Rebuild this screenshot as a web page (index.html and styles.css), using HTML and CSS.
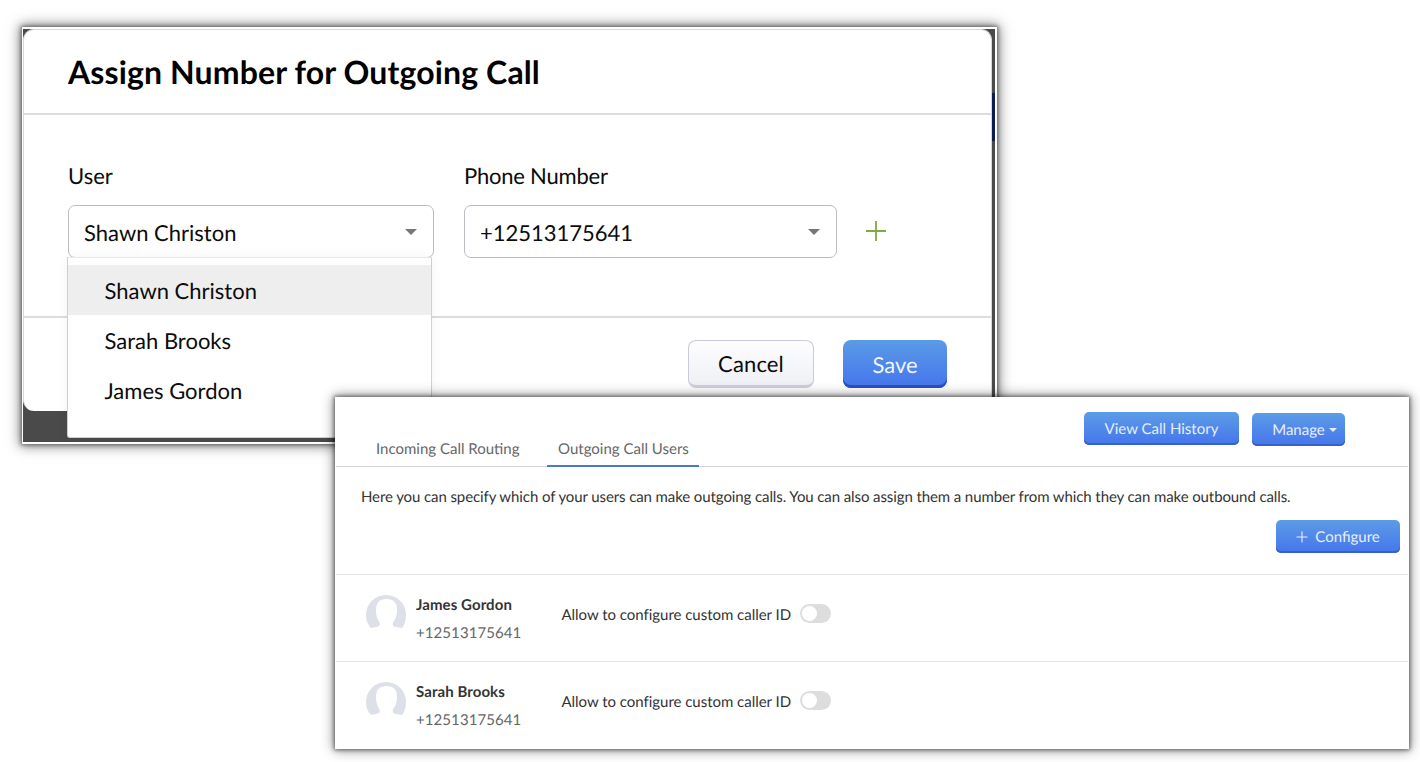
FILE: index.html
```html
<!DOCTYPE html>
<html lang="en">
<head>
<meta charset="UTF-8">
<meta name="viewport" content="width=device-width, initial-scale=1.0">
<title>Outgoing Call Users</title>
<link rel="stylesheet" href="styles.css">
</head>
<body>

<div class="backdrop">
    <div class="modal">
        <div class="modal-header">
            <h1>Assign Number for Outgoing Call</h1>
        </div>

        <div class="modal-body">
            <div class="field user-field">
                <span class="label">User</span>
                <div class="select"><span class="value">Shawn Christon</span><i class="arrow"></i></div>
                <ul class="dropdown">
                    <li class="selected">Shawn Christon</li>
                    <li>Sarah Brooks</li>
                    <li>James Gordon</li>
                </ul>
            </div>
            <div class="field phone-field">
                <span class="label">Phone Number</span>
                <div class="select"><span class="value">+12513175641</span><i class="arrow"></i></div>
            </div>
            <svg class="add" width="20" height="20" viewBox="0 0 20 20">
                <path d="M10 0V20M0 10H20" stroke="#7cab45" stroke-width="1.8"/>
            </svg>
        </div>

        <div class="modal-footer">
            <button class="btn-large cancel">Cancel</button>
            <button class="btn-large save">Save</button>
        </div>
    </div>
    <div class="page-edge"></div>
</div>

<div class="users-panel">
    <div class="tabs">
        <div class="tab tab-incoming">Incoming Call Routing</div>
        <div class="tab tab-outgoing active">Outgoing Call Users</div>
        <div class="actions">
            <button class="btn history">View Call History</button>
            <button class="btn manage"><span>Manage</span><i class="arrow"></i></button>
        </div>
    </div>

    <div class="intro">
        <p>Here you can specify which of your users can make outgoing calls. You can also assign them a number from which they can make outbound calls.</p>
        <button class="btn configure">
            <svg width="12" height="12" viewBox="0 0 12 12"><path d="M6 .5V11.5M.5 6H11.5" stroke="#e6eefc" stroke-width="1.1"/></svg>
            <span>Configure</span>
        </button>
    </div>

    <div class="row">
        <svg class="avatar" width="40" height="34" viewBox="0 0 40 34">
            <path d="M5 33Q0 28 0 20A20 20 0 0 1 40 20Q40 28 36 33L28 31.5Q26 30 27 27Q31 23 31 15Q31 4 20.5 4Q10 4 10 15Q10 23 13.5 27Q14.5 30 12 31.5Z" fill="#dde0e9"/>
        </svg>
        <div class="person">
            <b>James Gordon</b>
            <span class="phone">+12513175641</span>
        </div>
        <span class="caller-id">Allow to configure custom caller ID</span>
        <div class="toggle"></div>
    </div>
    <div class="row">
        <svg class="avatar" width="40" height="34" viewBox="0 0 40 34">
            <path d="M5 33Q0 28 0 20A20 20 0 0 1 40 20Q40 28 36 33L28 31.5Q26 30 27 27Q31 23 31 15Q31 4 20.5 4Q10 4 10 15Q10 23 13.5 27Q14.5 30 12 31.5Z" fill="#dde0e9"/>
        </svg>
        <div class="person">
            <b>Sarah Brooks</b>
            <span class="phone">+12513175641</span>
        </div>
        <span class="caller-id">Allow to configure custom caller ID</span>
        <div class="toggle"></div>
    </div>
</div>

</body>
</html>
```
FILE: styles.css
```css
* {
    box-sizing: border-box;
}

body {
    margin: 0;
    height: 762px;
    padding: 27px 0 0 22px;
    overflow: hidden;
    position: relative;
    background: #fff;
    font-family: Lato, sans-serif;
    color: #0c0c0c;
    white-space: nowrap;
    text-rendering: geometricPrecision;
}

button {
    font-family: inherit;
    text-rendering: inherit;
    padding: 0;
    border: none;
    flex: none;
}

.arrow {
    display: block;
    border: 6px solid transparent;
    border-top-color: #777;
    border-bottom: 0;
}

/* dialog */
.backdrop {
    width: 975px;
    height: 417px;
    display: flex;
    align-items: flex-start;
    background: #4a4a4a;
    border: 2px solid #fff;
    border-left-width: 1px;
    box-shadow: 0 0 4px 1px rgba(0, 0, 0, 0.45), 0 0 12px 2px rgba(0, 0, 0, 0.5);
}

.modal {
    width: 969px;
    height: 382px;
    background: #fff;
    border: 1px solid #d8d8d8;
    border-bottom: 0;
    border-radius: 11px;
    flex: none;
}

.page-edge {
    flex: 1;
    height: 382px;
    background: linear-gradient(#4a4a4a 64px, #0b1c52 64px, #0b1c52 112px, #4a4a4a 112px);
}

.modal-header {
    height: 85px;
    padding: 0 44px;
    border-bottom: 2px solid #ddd;
    display: flex;
    align-items: center;
}

.modal-header h1 {
    margin: 0;
    font-size: 32px;
    line-height: 40px;
    letter-spacing: 0.13px;
    color: #000;
}

.modal-body {
    height: 203px;
    padding: 46px 44px 0;
    border-bottom: 2px solid #ddd;
    display: flex;
    align-items: flex-start;
}

.field {
    position: relative;
    display: flex;
    flex-direction: column;
    align-items: flex-start;
    font-size: 22px;
}

.user-field {
    width: 366px;
    margin-right: 30px;
}

.phone-field {
    width: 373px;
    margin-right: 29px;
}

.label {
    line-height: 30px;
    margin-bottom: 14px;
}

.phone-field .label {
    letter-spacing: -0.22px;
}

.select {
    width: 100%;
    height: 53px;
    padding: 1px 16px 0 15px;
    border: 1.5px solid #b9bcc3;
    border-radius: 7px;
    display: flex;
    align-items: center;
    justify-content: space-between;
}

.dropdown {
    position: absolute;
    z-index: 1;
    top: 96px;
    left: -1px;
    width: 365px;
    height: 181px;
    margin: 0;
    padding: 7px 0 0;
    list-style: none;
    background: #fff;
    border: 1px solid #d0d0d0;
    border-top-color: #e8e8e8;
    border-radius: 0 0 3px 3px;
    box-shadow: 0 0 12px rgba(0, 0, 0, 0.05);
}

.dropdown li {
    height: 50px;
    padding-left: 36.5px;
    line-height: 51px;
}

.dropdown .selected {
    background: #eee;
}

.add {
    margin-top: 60px;
}

.modal-footer {
    padding: 22px 44px 0 0;
    display: flex;
    justify-content: flex-end;
    gap: 29px;
}

.btn-large {
    height: 48px;
    font-size: 22px;
    border-radius: 8px;
}

.cancel {
    width: 126px;
    color: #0c0c0c;
    letter-spacing: 0.15px;
    border: 1px solid #c9cbd9;
    border-bottom: 3px solid #cfd0db;
    background: linear-gradient(#fdfdfe, #eff0f5);
}

.save {
    width: 104px;
    color: #eff5ff;
    background: linear-gradient(#5a9be6, #4575ec);
    box-shadow: inset 0 -3px #2852c2;
}

/* outgoing call users */
.users-panel {
    position: absolute;
    z-index: 2;
    left: 335px;
    top: 397px;
    width: 1074px;
    height: 352px;
    background: #fff;
    font-size: 15px;
    color: #333;
    box-shadow: 0 0 4px 1px rgba(0, 0, 0, 0.5), 0 0 12px 1px rgba(0, 0, 0, 0.45);
}

.tabs {
    height: 70px;
    padding-left: 29px;
    margin: 0 1px;
    border-bottom: 1px solid #d3d5d5;
    display: flex;
    align-items: flex-end;
}

.tab {
    height: 35px;
    padding: 8px 11px 0;
    line-height: 20px;
    color: #666;
}

.tab-incoming {
    width: 166px;
    margin-right: 16px;
}

.tab-outgoing {
    width: 152px;
}

.tab.active {
    height: 36px;
    margin-bottom: -1px;
    border-bottom: 2px solid #4778c9;
}

.actions {
    display: flex;
    align-items: flex-end;
    gap: 13px;
    margin: 0 63px 20px auto;
}

.btn {
    height: 33px;
    padding-top: 1px;
    font-size: 15px;
    color: #e6eefc;
    border-radius: 5px;
    background: linear-gradient(#5c9ce6, #4575ec);
    box-shadow: inset 0 -2px #3561c9;
    display: flex;
    align-items: center;
    justify-content: center;
}

.history {
    width: 155px;
    margin-bottom: 1px;
}

.manage {
    width: 93px;
    padding-left: 12px;
    gap: 4px;
}

.manage .arrow {
    border-width: 4px 4px 0;
    border-top-color: #e6eefc;
}

.intro {
    height: 107px;
    padding: 20px 9px 0 26px;
}

.intro p {
    margin: 0 0 13px;
    line-height: 20px;
    letter-spacing: -0.1px;
}

.configure {
    width: 124px;
    margin-left: auto;
    gap: 7px;
}

.row {
    height: 87px;
    margin: 0 1px;
    padding-left: 30px;
    border-top: 1px solid #e6e6e6;
    display: flex;
    align-items: flex-start;
    line-height: 20px;
}

.avatar {
    margin: 20px 10px 0 0;
}

.person {
    width: 146px;
    padding-top: 20px;
}

.person b {
    display: block;
    margin-bottom: 8px;
    letter-spacing: 0.08px;
}

.phone {
    color: #666;
    letter-spacing: 0.08px;
}

.caller-id {
    margin: 30px 10px 0 -0.5px;
    width: 228.5px;
    letter-spacing: -0.03px;
}

.toggle {
    width: 31px;
    height: 19px;
    margin-top: 29px;
    padding: 2px;
    border-radius: 10px;
    background: #ddd;
}

.toggle::before {
    content: "";
    display: block;
    width: 15px;
    height: 15px;
    border-radius: 50%;
    background: #fff;
}
```
